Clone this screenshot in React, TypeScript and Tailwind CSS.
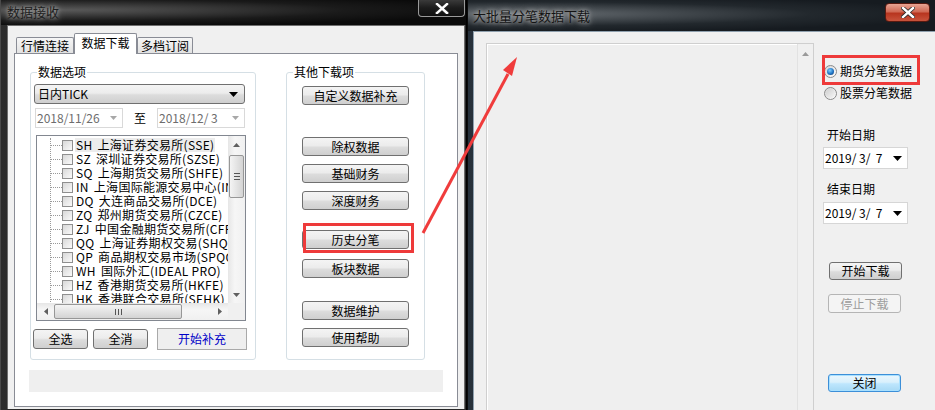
import React from "react";

const btn =
  "flex items-center justify-center rounded-[3px] border border-[#707070] bg-[linear-gradient(180deg,#f4f4f4_0%,#ececec_45%,#dcdcdc_55%,#cfcfcf_100%)] leading-[14px] text-black";

function DownTri({ color = "#000", w = 8, h = 4 }: { color?: string; w?: number; h?: number }) {
  return (
    <svg width={w} height={h} viewBox={`0 0 ${w} ${h}`}>
      <polygon points={`0,0 ${w},0 ${w / 2},${h}`} fill={color} />
    </svg>
  );
}

function CloseX() {
  return (
    <svg width="14" height="11" viewBox="0 0 14 11">
      <path d="M2 1 L12 10 M12 1 L2 10" stroke="#2a2a2a" strokeWidth="4" strokeLinecap="square" />
      <path d="M2 1 L12 10 M12 1 L2 10" stroke="#ffffff" strokeWidth="2.4" strokeLinecap="square" />
    </svg>
  );
}

const items: [string, string][] = [
  ["SH", "上海证券交易所(SSE)"],
  ["SZ", "深圳证券交易所(SZSE)"],
  ["SQ", "上海期货交易所(SHFE)"],
  ["IN", "上海国际能源交易中心(INE)"],
  ["DQ", "大连商品交易所(DCE)"],
  ["ZQ", "郑州期货交易所(CZCE)"],
  ["ZJ", "中国金融期货交易所(CFFEX)"],
  ["QQ", "上海证券期权交易(SHQQ)"],
  ["QP", "商品期权交易市场(SPQQ)"],
  ["WH", "国际外汇(IDEAL PRO)"],
  ["HZ", "香港期货交易所(HKFE)"],
  ["HK", "香港联合交易所(SEHK)"],
];

function Tree() {
  return (
    <div className="ml-[5px] mt-[7px] flex h-[186px] w-[210px] flex-col border border-[#828790] bg-white">
      <div className="flex h-[167px]">
        <div className="w-[191px] overflow-hidden pl-[13px] pt-[2px]">
          <div className="w-[400px] border-l border-dotted border-[#9a9a9a]">
            {items.map(([c, n], i) => (
              <div key={c} className="flex h-[14px] items-center">
                <div className="w-[11px] shrink-0 border-t border-dotted border-[#9a9a9a]" />
                <div className="h-[11px] w-[11px] shrink-0 border border-[#8f8f8f] bg-[linear-gradient(135deg,#d8d8d8,#fafafa)]" />
                <div
                  className={
                    i === 0
                      ? "ml-[2px] flex shrink-0 whitespace-nowrap bg-[#ececec] px-[1px] leading-[14px] tracking-[0.3px]"
                      : "ml-[2px] flex shrink-0 whitespace-nowrap px-[1px] leading-[14px] tracking-[0.3px]"
                  }
                >
                  <span className="mr-[5px]">{c}</span>
                  <span>{n}</span>
                </div>
              </div>
            ))}
          </div>
        </div>
        <div className="flex w-[17px] flex-col bg-[linear-gradient(90deg,#e6e6e6,#f6f6f6_40%,#f0f0f0)]">
          <div className="flex h-[17px] items-center justify-center">
            <svg width="7" height="4" viewBox="0 0 7 4">
              <polygon points="0,4 7,4 3.5,0" fill="#606060" />
            </svg>
          </div>
          <div className="mx-[1px] mt-[2px] flex h-[43px] items-center justify-center rounded-[2px] border border-[#979797] bg-[linear-gradient(90deg,#f4f4f4,#e4e4e4_50%,#d4d4d4)]">
            <div className="flex flex-col gap-[2px]">
              <div className="h-px w-[6px] bg-[#555]" />
              <div className="h-px w-[6px] bg-[#555]" />
              <div className="h-px w-[6px] bg-[#555]" />
            </div>
          </div>
          <div className="flex-1" />
          <div className="flex h-[17px] items-center justify-center">
            <DownTri color="#606060" w={7} h={4} />
          </div>
        </div>
      </div>
      <div className="flex h-[17px]">
        <div className="flex flex-1 items-center bg-[linear-gradient(180deg,#e6e6e6,#f6f6f6_40%,#f0f0f0)]">
          <div className="flex w-[17px] justify-center">
            <svg width="4" height="7" viewBox="0 0 4 7">
              <polygon points="4,0 4,7 0,3.5" fill="#606060" />
            </svg>
          </div>
          <div className="flex h-[15px] w-[128px] items-center justify-center rounded-[2px] border border-[#979797] bg-[linear-gradient(180deg,#f4f4f4,#e4e4e4_50%,#d4d4d4)]">
            <div className="flex gap-[2px]">
              <div className="h-[6px] w-px bg-[#555]" />
              <div className="h-[6px] w-px bg-[#555]" />
              <div className="h-[6px] w-px bg-[#555]" />
            </div>
          </div>
          <div className="flex-1" />
          <div className="flex w-[17px] justify-center">
            <svg width="4" height="7" viewBox="0 0 4 7">
              <polygon points="0,0 0,7 4,3.5" fill="#606060" />
            </svg>
          </div>
        </div>
        <div className="w-[17px] bg-[#f0f0f0]" />
      </div>
    </div>
  );
}

function LeftWindow() {
  return (
    <div className="flex h-[410px] w-[466px] shrink-0 flex-col border-l border-[#4a4a4a] bg-[linear-gradient(90deg,#2c2c2c,#1b1b1b_40%,#151515_80%,#2a2a2a)]">
      <div className="relative flex h-[25px] shrink-0 items-start justify-between bg-[radial-gradient(ellipse_at_12%_40%,#5a5a5a_0%,#3a3a3a_25%,#1a1a1a_50%,#0b0b0b_75%)]">
        <div className="pl-[6px] pt-[4px] text-[13px] leading-[16px] text-[#202020] [text-shadow:0_0_4px_rgba(190,190,190,0.9),0_0_8px_rgba(160,160,160,0.8)]">
          数据接收
        </div>
        <div className="mr-px flex h-[17px] w-[47px] items-center justify-center rounded-b-[4px] border border-t-0 border-[#9a9a9a] bg-[linear-gradient(180deg,#3a3a3a,#1c1c1c_50%,#101010)]">
          <CloseX />
        </div>
      </div>
      <div className="ml-[6px] flex h-[384px] w-[458px] flex-col border border-b-0 border-[#6e6e6e] bg-[#f0f0f0]">
        <div className="flex h-[27px] items-end pl-[8px]">
          <div className="flex h-[16px] w-[58px] items-center justify-center rounded-t-[2px] border border-b-0 border-[#898c95] bg-[linear-gradient(180deg,#f6f6f6,#e2e2e2)] leading-[14px]">
            行情连接
          </div>
          <div className="relative z-10 -mb-px flex h-[21px] w-[63px] items-center justify-center rounded-t-[2px] border border-b-0 border-[#898c95] bg-white pb-[2px] leading-[14px]">
            数据下载
          </div>
          <div className="flex h-[16px] w-[56px] items-center justify-center rounded-t-[2px] border border-b-0 border-[#898c95] bg-[linear-gradient(180deg,#f6f6f6,#e2e2e2)] leading-[14px]">
            多档订阅
          </div>
        </div>
        <div className="ml-[6px] flex h-[354px] w-[444px] flex-col border border-[#898c95] bg-white">
          <div className="flex pl-[15px] pt-[18px]">
            {/* group 1 */}
            <div className="relative h-[288px] w-[226px] rounded-[3px] border border-[#d5dfe5]">
              <span className="absolute left-[6px] top-[-8px] bg-white px-[1px] leading-[14px]">数据选项</span>
              <div className="ml-[3px] mt-[11px] flex h-[20px] w-[211px] items-center justify-between rounded-[3px] border border-[#707070] bg-[linear-gradient(180deg,#f4f4f4_0%,#ececec_45%,#dcdcdc_55%,#cfcfcf_100%)] pl-[3px] pr-[6px] leading-[14px]">
                <span>日内TICK</span>
                <DownTri w={9} h={5} />
              </div>
              <div className="ml-[4px] mt-[4px] flex h-[20px] items-center">
                <div className="flex h-[20px] w-[88px] items-center justify-between border border-[#d9d9d9] bg-white pl-[1px] pr-[5px] text-[#6d6d6d]">
                  <span className="leading-[14px]">2018/11/26</span>
                  <DownTri color="#a8a8a8" w={7} h={4} />
                </div>
                <div className="flex w-[34px] justify-center leading-[14px]">至</div>
                <div className="flex h-[20px] w-[88px] items-center justify-between border border-[#d9d9d9] bg-white pl-[1px] pr-[5px] text-[#6d6d6d]">
                  <span className="whitespace-pre leading-[14px]">2018/12/ 3</span>
                  <DownTri color="#a8a8a8" w={7} h={4} />
                </div>
              </div>
              <Tree />
              <div className="mt-[7px] flex items-center">
                <div className={`ml-[2px] h-[20px] w-[55px] ${btn}`}>全选</div>
                <div className={`ml-[5px] h-[20px] w-[55px] ${btn}`}>全消</div>
                <div className="ml-[9px] flex h-[22px] w-[90px] items-center justify-center border border-[#a9a9a9] bg-[#efefef] leading-[14px] text-[#0000c8]">
                  开始补充
                </div>
              </div>
            </div>
            {/* group 2 */}
            <div className="relative ml-[30px] flex h-[288px] w-[139px] flex-col rounded-[3px] border border-[#d5dfe5]">
              <span className="absolute left-[6px] top-[-8px] bg-white px-[1px] leading-[14px]">其他下载项</span>
              <div className={`ml-[15px] mt-[13px] h-[19px] w-[107px] ${btn}`}>自定义数据补充</div>
              <div className={`ml-[15px] mt-[32px] h-[19px] w-[107px] ${btn}`}>除权数据</div>
              <div className={`ml-[15px] mt-[8px] h-[19px] w-[107px] ${btn}`}>基础财务</div>
              <div className={`ml-[15px] mt-[8px] h-[19px] w-[107px] ${btn}`}>深度财务</div>
              <div className={`ml-[15px] mt-[20px] h-[19px] w-[107px] ${btn}`}>历史分笔</div>
              <div className={`ml-[15px] mt-[10px] h-[19px] w-[107px] ${btn}`}>板块数据</div>
              <div className={`ml-[15px] mt-[23px] h-[19px] w-[107px] ${btn}`}>数据维护</div>
              <div className={`ml-[15px] mt-[8px] h-[19px] w-[107px] ${btn}`}>使用帮助</div>
              <div className="absolute left-[16px] top-[150px] h-[30px] w-[111px] border-[3px] border-[#ee3a3a]" />
            </div>
          </div>
          <div className="ml-[14px] mt-[10px] h-[22px] w-[414px] bg-[#efefef]" />
        </div>
      </div>
    </div>
  );
}

function Radio({ checked }: { checked?: boolean }) {
  return (
    <div className="flex h-[13px] w-[13px] shrink-0 items-center justify-center rounded-full border border-[#8a8a8a] bg-[linear-gradient(135deg,#d4d4d4,#ffffff)]">
      {checked ? (
        <div className="h-[7px] w-[7px] rounded-full bg-[radial-gradient(circle_at_40%_35%,#7fd0ff,#1f73c4_55%,#0c2e5a)]" />
      ) : (
        <div className="h-[9px] w-[9px] rounded-full bg-[linear-gradient(135deg,#cfcfcf,#f6f6f6)]" />
      )}
    </div>
  );
}

function RightWindow() {
  return (
    <div className="flex h-[410px] w-[468px] shrink-0 flex-col border-l border-[#0a0a0a] bg-[linear-gradient(90deg,#27313b,#1d252d_30%,#1a2128_70%,#242b33)]">
      <div className="flex h-[31px] shrink-0 items-start justify-between bg-[radial-gradient(ellipse_at_10%_45%,#6a7075_0%,#454b50_25%,#22282d_50%,#161b20_75%),radial-gradient(circle_at_90%_70%,#2a5a78,transparent_20%)]">
        <div className="pl-[5px] pt-[8px] text-[13px] leading-[16px] text-[#141414] [text-shadow:0_0_4px_rgba(200,200,200,0.9),0_0_8px_rgba(170,170,170,0.8)]">
          大批量分笔数据下载
        </div>
        <div className="mr-[5px] mt-[3px] flex h-[19px] w-[45px] items-center justify-center rounded-[4px] border border-[#5a1a10] bg-[linear-gradient(180deg,#e8a493_0%,#d06a55_45%,#b8351f_55%,#c8533c_100%)]">
          <CloseX />
        </div>
      </div>
      <div className="ml-[5px] flex flex-1 border-l border-t border-[#8fa0ae] bg-[#f0f0f0]">
        <div className="ml-[12px] mt-[11px] flex w-[328px] border border-b-0 border-[#cfcfcf]">
          <div className="flex-1 border-l border-t border-white bg-[#efefef]" />
          <div className="flex w-[16px] flex-col items-center border-l border-[#e2e2e2] bg-[#f0f0f0] pt-[8px]">
            <svg width="7" height="4" viewBox="0 0 7 4">
              <polygon points="0,4 7,4 3.5,0" fill="#9a9a9a" />
            </svg>
          </div>
        </div>
        <div className="relative ml-[8px] flex w-[104px] flex-col">
          <div className="ml-[2px] mt-[32px] flex h-[14px] items-center">
            <Radio checked />
            <span className="ml-[3px] whitespace-nowrap leading-[14px]">期货分笔数据</span>
          </div>
          <div className="ml-[2px] mt-[8px] flex h-[14px] items-center">
            <Radio />
            <span className="ml-[3px] whitespace-nowrap leading-[14px]">股票分笔数据</span>
          </div>
          <div className="ml-[5px] mt-[28px] h-[14px] leading-[14px]">开始日期</div>
          <div className="ml-px mt-[5px] flex h-[22px] w-[85px] items-center justify-between border border-[#d6d6d6] bg-white pl-[1px] pr-[5px]">
            <span className="whitespace-pre leading-[14px]">2019/ 3/  7</span>
            <DownTri w={9} h={5} />
          </div>
          <div className="ml-[5px] mt-[13px] h-[14px] leading-[14px]">结束日期</div>
          <div className="ml-px mt-[6px] flex h-[22px] w-[85px] items-center justify-between border border-[#d6d6d6] bg-white pl-[1px] pr-[5px]">
            <span className="whitespace-pre leading-[14px]">2019/ 3/  7</span>
            <DownTri w={9} h={5} />
          </div>
          <div className={`ml-[7px] mt-[38px] h-[18px] w-[73px] ${btn}`}>开始下载</div>
          <div className="ml-[6px] mt-[14px] flex h-[19px] w-[73px] items-center justify-center rounded-[3px] border border-[#b5b5b5] bg-[#f4f4f4] leading-[14px] text-[#9d9d9d]">
            停止下载
          </div>
          <div className="ml-[6px] mt-[61px] flex h-[18px] w-[73px] items-center justify-center rounded-[3px] border border-[#3c8fd8] bg-[linear-gradient(180deg,#eaf6fd_0%,#d9f0fc_45%,#bee6fd_55%,#a7d9f5_100%)] leading-[14px] shadow-[inset_0_0_0_1px_#a8e0ff]">
            关闭
          </div>
          <div className="absolute left-0 top-[23px] h-[30px] w-[98px] border-[3px] border-[#ee3a3a]" />
        </div>
      </div>
    </div>
  );
}

export default function App() {
  return (
    <div className="relative flex h-[410px] w-[935px] overflow-hidden bg-[#050505] font-['Noto_Sans_CJK_SC',sans-serif] text-[12px] text-black">
      <LeftWindow />
      <div className="w-px shrink-0 bg-black" />
      <RightWindow />
      <svg className="pointer-events-none absolute left-0 top-0" width="935" height="410" viewBox="0 0 935 410">
        <line x1="423" y1="233" x2="508" y2="74" stroke="#f03c3c" strokeWidth="3" />
        <polygon points="517,57 503,70 512,76" fill="#f03c3c" />
      </svg>
    </div>
  );
}
